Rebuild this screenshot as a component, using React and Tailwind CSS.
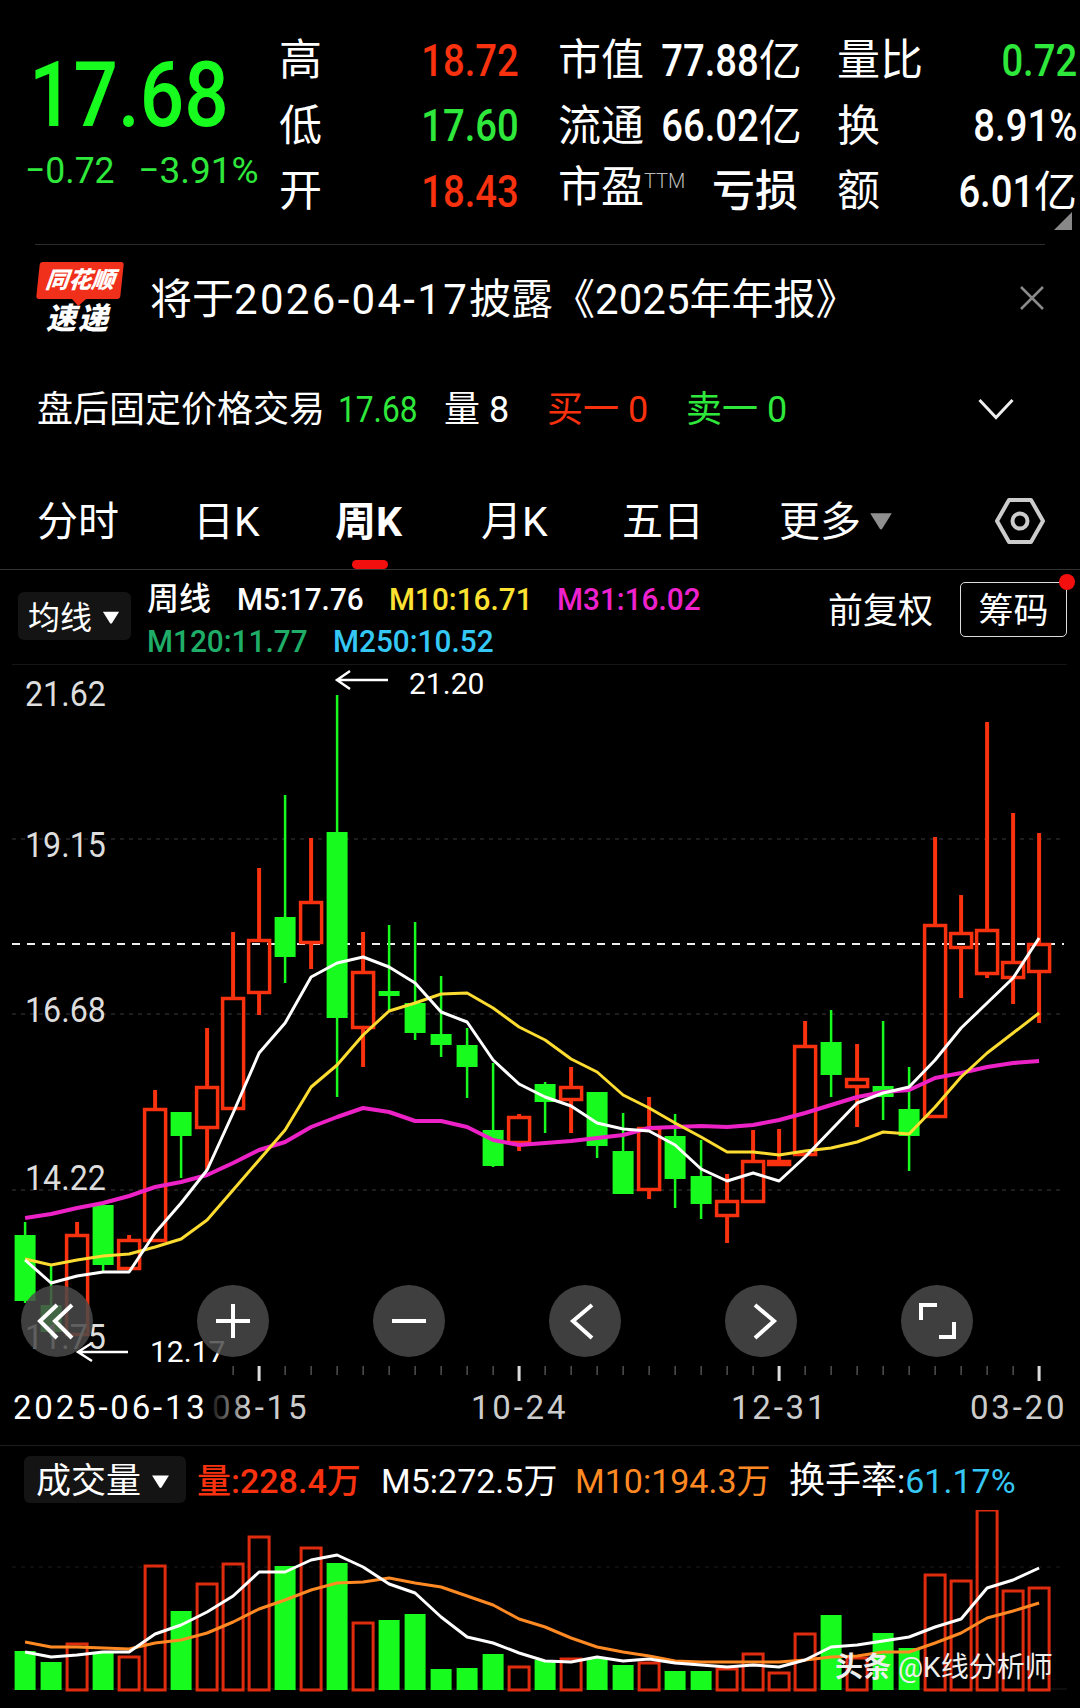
import React from 'react';

const FONT = "[font-family:'Roboto','Noto_Sans_CJK_SC',sans-serif]";
// the app's digits are narrower than Roboto's
const NARROW_L = 'inline-block origin-left scale-x-[.92]';

// [high, bodyTop, bodyBottom, low, up]
const candles = [
  [1222, 1235, 1301, 1303, 0], [1265, 1305, 1332, 1337, 0], [1222, 1234, 1334, 1334, 1], [1203, 1205, 1265, 1271, 0],
  [1235, 1239, 1268, 1268, 1], [1090, 1108, 1240, 1240, 1], [1112, 1112, 1136, 1178, 0], [1028, 1086, 1127, 1170, 1],
  [932, 997, 1108, 1108, 1], [868, 939, 992, 1015, 1], [795, 917, 957, 983, 0], [838, 901, 942, 969, 1],
  [695, 832, 1018, 1097, 0], [932, 971, 1027, 1067, 1], [925, 991, 996, 1010, 0], [922, 1003, 1033, 1040, 0],
  [976, 1034, 1045, 1057, 0], [1028, 1045, 1067, 1098, 0], [1063, 1130, 1166, 1167, 0], [1114, 1116, 1142, 1151, 1],
  [1082, 1084, 1102, 1133, 0], [1067, 1086, 1099, 1133, 1], [1092, 1092, 1146, 1158, 0], [1113, 1151, 1194, 1194, 0],
  [1097, 1127, 1189, 1199, 1], [1114, 1136, 1179, 1208, 0], [1140, 1176, 1204, 1219, 0], [1174, 1200, 1215, 1243, 1],
  [1130, 1160, 1201, 1201, 1], [1129, 1160, 1164, 1164, 1], [1021, 1045, 1154, 1154, 1], [1010, 1042, 1075, 1097, 0],
  [1044, 1078, 1086, 1127, 1], [1021, 1086, 1097, 1120, 0], [1067, 1109, 1136, 1171, 0], [837, 924, 1116, 1118, 1],
  [895, 932, 947, 998, 1], [722, 929, 973, 978, 1], [813, 961, 977, 1004, 1], [833, 943, 971, 1023, 1],
];

const m5 = [1260, 1283, 1276, 1272, 1272, 1233, 1203, 1170, 1113, 1053, 1023, 977, 963, 957, 967, 983, 1012, 1022, 1060, 1084, 1097, 1106, 1123, 1129, 1131, 1145, 1169, 1181, 1173, 1181, 1157, 1130, 1103, 1093, 1087, 1060, 1028, 1003, 978, 938];
const m10 = [1259, 1265, 1260, 1256, 1254, 1247, 1239, 1220, 1190, 1160, 1130, 1087, 1065, 1035, 1011, 1003, 994, 993, 1008, 1027, 1040, 1059, 1072, 1095, 1108, 1123, 1137, 1152, 1152, 1155, 1151, 1148, 1142, 1132, 1134, 1107, 1077, 1053, 1033, 1013];
const m31 = [1218, 1214, 1208, 1203, 1196, 1187, 1182, 1175, 1163, 1150, 1142, 1127, 1117, 1108, 1112, 1121, 1121, 1127, 1140, 1145, 1143, 1141, 1138, 1135, 1128, 1127, 1126, 1127, 1125, 1120, 1113, 1105, 1097, 1092, 1090, 1078, 1073, 1067, 1063, 1061];

const volumes = [1651, 1662, 1643, 1653, 1656, 1565, 1611, 1583, 1563, 1536, 1566, 1547, 1563, 1622, 1620, 1614, 1669, 1668, 1654, 1666, 1660, 1658, 1658, 1665, 1662, 1671, 1671, 1668, 1653, 1672, 1633, 1615, 1657, 1633, 1648, 1574, 1580, 1509, 1590, 1587];
const volM5 = [1652, 1657, 1655, 1652, 1652, 1634, 1625, 1612, 1596, 1572, 1572, 1560, 1555, 1567, 1584, 1593, 1617, 1637, 1643, 1653, 1661, 1662, 1657, 1661, 1659, 1663, 1665, 1667, 1665, 1667, 1660, 1647, 1645, 1641, 1637, 1627, 1619, 1588, 1580, 1568];
const volM10 = [1642, 1647, 1647, 1648, 1649, 1643, 1640, 1633, 1622, 1609, 1600, 1590, 1583, 1582, 1578, 1583, 1587, 1596, 1605, 1619, 1627, 1638, 1647, 1652, 1656, 1661, 1662, 1662, 1662, 1662, 1660, 1657, 1656, 1652, 1652, 1643, 1633, 1618, 1611, 1603];

const RED = '#f8310f';
const GREEN = '#18fb1e';
const cx = (i) => 25.1 + 26 * i;
const points = (ys) => ys.map((y, i) => `${cx(i)},${y}`).join(' ');

function Line({ ys, color, width = 3 }) {
  return <polyline points={points(ys)} fill="none" stroke={color} strokeWidth={width} strokeLinejoin="round" />;
}

function KChart() {
  return (
    <svg className="block" width="1080" height="722" viewBox="0 664 1080 722">
      <line x1="12" x2="1067" y1="664.5" y2="664.5" stroke="#161616" />
      {[839, 1014, 1190].map((y) => (
        <line key={y} x1="12" x2="1064" y1={y} y2={y} stroke="#3a3a3a" strokeDasharray="4 5" />
      ))}
      <line x1="12" x2="1064" y1="944" y2="944" stroke="#eee" strokeWidth="2" strokeDasharray="8 7" />
      {candles.map(([high, top, bottom, low, up], i) => {
        const x = cx(i);
        const color = up ? RED : GREEN;
        return (
          <g key={i}>
            <line x1={x} x2={x} y1={high} y2={up ? top : low} stroke={color} strokeWidth={up ? 4 : 2.5} />
            {up ? <line x1={x} x2={x} y1={bottom} y2={low} stroke={color} strokeWidth="4" /> : null}
            {up ? (
              <rect x={x - 10.5} y={top + 1.5} width="21" height={Math.max(bottom - top - 1, 1)} fill="none" stroke={color} strokeWidth="3.5" />
            ) : (
              <rect x={x - 10.5} y={top} width="21" height={bottom - top} fill={color} />
            )}
          </g>
        );
      })}
      <Line ys={m31} color="#ec22c6" width={4} />
      <Line ys={m10} color="#fddc32" />
      <Line ys={m5} color="#ffffff" />
      {/* time axis */}
      {candles.map((_, i) => {
        if (i < 8) return null;
        const major = (i - 9) % 10 === 0;
        return (
          <line key={i} x1={cx(i)} x2={cx(i)} y1="1366" y2={major ? 1381 : 1375} stroke={major ? '#ddd' : '#777'} strokeWidth={major ? 3 : 1} />
        );
      })}
      {/* high and low arrows */}
      <path d="M388 680H338M350 671L337 680L350 689" fill="none" stroke="#fff" strokeWidth="2.5" />
      <path d="M128 1352H78M92 1343L78 1352L92 1361" fill="none" stroke="#fff" strokeWidth="2.5" />
    </svg>
  );
}

function VolumeChart() {
  return (
    <svg className="block" width="1080" height="198" viewBox="0 1510 1080 198">
      <line x1="12" x2="1064" y1="1567" y2="1567" stroke="#1c1c1c" strokeDasharray="4 5" />
      <line x1="12" x2="1067" y1="1689" y2="1689" stroke="#1c1c1c" />
      {volumes.map((top, i) => {
        const x = cx(i);
        return candles[i][4] ? (
          <rect key={i} x={x - 10} y={top + 1} width="20" height={1690 - top - 1} fill="none" stroke={RED} strokeWidth="3" opacity="0.9" />
        ) : (
          <rect key={i} x={x - 10.5} y={top} width="21" height={1690 - top} fill={GREEN} />
        );
      })}
      <Line ys={volM10} color="#ff8a24" />
      <Line ys={volM5} color="#ffffff" />
    </svg>
  );
}

function Stat({ label, value, unit, color = 'text-white' }) {
  return (
    <div className="flex w-[240px] items-center justify-between whitespace-nowrap">
      <span>{label}</span>
      <span className={color}>
        {value ? <span className="inline-block origin-right scale-x-[.85] text-[45px] font-medium">{value}</span> : null}
        {unit}
      </span>
    </div>
  );
}

function Caret({ className }) {
  return (
    <svg className={className} viewBox="0 0 20 16" fill="currentColor">
      <path d="M1 1.5H19L11 14.5Q10 15.5 9 14.5Z" />
    </svg>
  );
}

function RoundButton({ d }) {
  return (
    <div className="h-[72px] w-[72px] rounded-full bg-[#4a4a4a]/85">
      <svg width="72" height="72" viewBox="0 0 72 72" fill="none" stroke="#fff" strokeWidth="4">
        <path d={d} />
      </svg>
    </div>
  );
}

export default function App() {
  return (
    <div className={`flex h-[1708px] w-[1080px] flex-col overflow-hidden bg-black text-white ${FONT}`}>
      {/* Quote header */}
      <header className="relative flex h-[245px] shrink-0 pt-[28px] text-[43px] leading-[65.5px]">
        <div className="w-[279px] shrink-0 pl-[25px]">
          <div className="ml-[4px] h-[121px] origin-left scale-x-[.86] whitespace-nowrap pt-[12px] text-[91px] font-medium leading-[110px] text-[#18fb1e]">17.68</div>
          <div className="mt-[-3px] flex gap-[20px] whitespace-nowrap text-[37px] leading-[50px] text-[#2fe83c]">
            <span className="inline-block origin-left scale-x-[.96]">−0.72</span>
            <span>−3.91%</span>
          </div>
        </div>
        <div className="grid auto-rows-[65.5px] grid-cols-[240px_240px_240px] gap-x-[39px]">
          <Stat label="高" value="18.72" color="text-[#f8310f]" />
          <Stat label="市值" value="77.88" unit="亿" />
          <Stat label="量比" value="0.72" color="text-[#2fe83c]" />
          <Stat label="低" value="17.60" color="text-[#2fe83c]" />
          <Stat label="流通" value="66.02" unit="亿" />
          <Stat label="换" value="8.91%" />
          <Stat label="开" value="18.43" color="text-[#f8310f]" />
          <Stat
            label={
              <>
                市盈<span className="relative top-[-14px] text-[20px] font-light text-[#bbb]">TTM</span>
              </>
            }
            unit={<span className="font-medium">亏损</span>}
          />
          <Stat label="额" value="6.01" unit="亿" />
        </div>
        <div className="absolute right-[8px] top-[212px] h-0 w-0 border-b-[18px] border-l-[18px] border-b-[#888] border-l-transparent" />
        <div className="absolute bottom-0 left-[35px] h-px w-[1010px] bg-[#2c2c2c]" />
      </header>

      {/* Report notice */}
      <section className="flex h-[105px] shrink-0 items-center">
        <div className="ml-[38px] flex w-[112px] shrink-0 flex-col pt-[2px] italic">
          <div className="relative flex h-[37px] w-[84px] -skew-x-6 items-center justify-center rounded-[3px] bg-[#f0301a] text-[23px] font-black leading-none">
            同花顺
            <div className="absolute bottom-[-5px] left-[38px] h-[10px] w-[10px] rotate-45 bg-[#f0301a]" />
          </div>
          <div className="mt-[4px] pl-[8px] text-[30px] font-black leading-[32px] tracking-[2px]">速递</div>
        </div>
        <div className="mt-[4px] whitespace-nowrap text-[42px] leading-none">
          将于<span className="tracking-[2.3px]">2026-04-17</span>披露《2025年年报》
        </div>
        <svg className="ml-auto mr-[35px]" width="26" height="26" viewBox="0 0 26 26" stroke="#8a8a8a" strokeWidth="2.5">
          <path d="M2 2L24 24M24 2L2 24" />
        </svg>
      </section>

      {/* After hours */}
      <section className="flex h-[115px] shrink-0 items-start pl-[37px] pt-[38px] text-[36px] leading-[44px]">
        <span className="w-[301px]">盘后固定价格交易</span>
        <span className="w-[106px] text-[#2fe83c]">
          <span className="inline-block origin-left scale-x-[.88]">17.68</span>
        </span>
        <span className="w-[103px]">量 8</span>
        <span className="w-[139px] text-[#f8310f]">买一 0</span>
        <span className="text-[#2fe83c]">卖一 0</span>
        <svg className="ml-auto mr-[66px] mt-[10px]" width="36" height="22" viewBox="0 0 36 22" fill="none" stroke="#eee" strokeWidth="3">
          <path d="M1.5 2L18 19.5L34.5 2" />
        </svg>
      </section>

      {/* Period tabs */}
      <nav className="relative flex h-[105px] shrink-0 items-start border-b border-[#333] pt-[31px] text-[41px] leading-[52px]">
        <span className="ml-[37px] w-[156px]">分时</span>
        <span className="w-[142px]">日K</span>
        <span className="w-[146px] font-bold">周K</span>
        <span className="w-[141px]">月K</span>
        <span className="w-[157px]">五日</span>
        <span className="flex items-center">
          更多
          <Caret className="ml-[8px] mt-[-2px] h-[20px] w-[24px] text-[#8f8f8f]" />
        </span>
        <svg className="absolute left-[994px] top-[31px]" width="52" height="50" viewBox="0 0 52 50" fill="none" stroke="#ccc" strokeWidth="4" strokeLinejoin="round">
          <path d="M15 4H37L49 25L37 46H15L3 25Z" />
          <circle cx="26" cy="25" r="7.5" />
        </svg>
        <div className="absolute bottom-0 left-[352px] h-[9px] w-[36px] rounded-full bg-[#f40f0f]" />
      </nav>

      {/* MA legend */}
      <section className="relative flex h-[94px] shrink-0 pl-[18px] pt-[22px]">
        <div className="flex h-[48px] w-[113px] items-center rounded-[6px] bg-[#141414] pl-[10px] pt-[3px] text-[32px]">
          均线
          <Caret className="ml-[10px] h-[15px] w-[18px] text-white" />
        </div>
        <div className="ml-[16px] mt-[-14px] whitespace-nowrap text-[32px] font-medium leading-[42px]">
          <div className="flex">
            <span className="w-[90px]">周线</span>
            <span className="w-[152px]"><span className="inline-block origin-left scale-x-[.93]">M5:17.76</span></span>
            <span className="w-[168px] text-[#fde232]"><span className="inline-block origin-left scale-x-[.93]">M10:16.71</span></span>
            <span className="text-[#ee22cc]"><span className="inline-block origin-left scale-x-[.93]">M31:16.02</span></span>
          </div>
          <div className="flex">
            <span className="w-[186px] text-[#1fae68]"><span className="inline-block origin-left scale-x-[.93]">M120:11.77</span></span>
            <span className="text-[#35c8f5]"><span className="inline-block origin-left scale-x-[.93]">M250:10.52</span></span>
          </div>
        </div>
        <span className="absolute left-[828px] top-[20px] text-[35px] leading-[44px]">前复权</span>
        <div className="absolute left-[960px] top-[12px] flex h-[55px] w-[107px] items-center justify-center rounded-[5px] border border-[#ddd] pt-[5px] text-[35px]">
          筹码
          <div className="absolute right-[-9px] top-[-9px] h-[16px] w-[16px] rounded-full bg-[#f40f0f]" />
        </div>
      </section>

      {/* K line chart */}
      <section className="relative shrink-0">
        <KChart />
        <span className={`absolute left-[25px] top-[11px] text-[35px] leading-[40px] text-[#ddd] ${NARROW_L}`}>21.62</span>
        <span className={`absolute left-[25px] top-[162px] text-[35px] leading-[40px] text-[#ddd] ${NARROW_L}`}>19.15</span>
        <span className={`absolute left-[25px] top-[327px] text-[35px] leading-[40px] text-[#ddd] ${NARROW_L}`}>16.68</span>
        <span className={`absolute left-[25px] top-[495px] text-[35px] leading-[40px] text-[#ddd] ${NARROW_L}`}>14.22</span>
        <span className={`absolute left-[25px] top-[654px] text-[35px] leading-[40px] text-[#ddd] ${NARROW_L}`}>11.75</span>
        <span className="absolute left-[409px] top-[0px] text-[30px] leading-[40px]">21.20</span>
        <span className="absolute left-[150px] top-[668px] text-[30px] leading-[40px]">12.17</span>
        <div className="absolute left-[21px] top-[621px] flex gap-[104px]">
          <RoundButton d="M36 20L19 36L36 53M51 20L34 36L51 53" />
          <RoundButton d="M19 36H53M36 19V53" />
          <RoundButton d="M19 36H53" />
          <RoundButton d="M43 20L24 36L43 53" />
          <RoundButton d="M30 20L49 36L30 53" />
          <RoundButton d="M20 35V20H36M53 37V52H38" />
        </div>
      </section>

      {/* Dates */}
      <section className="relative h-[59px] shrink-0 text-[33px] leading-[44px] tracking-[2.8px] text-[#ccc]">
        <span className="absolute left-[13px] top-0 text-white">2025-06-13</span>
        <span className="absolute left-[212px] top-0">08-15</span>
        <div className="absolute left-[207px] top-0 h-[44px] w-[40px] bg-gradient-to-r from-black to-transparent" />
        <span className="absolute left-[471px] top-0">10-24</span>
        <span className="absolute left-[731px] top-0">12-31</span>
        <span className="absolute left-[970px] top-0">03-20</span>
      </section>

      {/* Volume */}
      <section className="relative flex h-[65px] shrink-0 whitespace-nowrap border-t border-[#1c1c1c] pl-[24px] pt-[12px] text-[34px] leading-[47px]">
        <div className="mt-[-2px] flex h-[47px] w-[162px] items-center rounded-[6px] bg-[#141414] pl-[12px] pt-[3px] text-[35px]">
          成交量
          <Caret className="ml-[10px] h-[15px] w-[19px] text-white" />
        </div>
        <span className="ml-[11px] w-[184px] font-medium text-[#f8310f]">量:228.4万</span>
        <span className="w-[194px]">M5:272.5万</span>
        <span className="w-[214px] text-[#ff8a24]">M10:194.3万</span>
        <span><span className="text-[36px]">换手率</span>:<span className="text-[#35c8f5]">61.17%</span></span>
      </section>
      <section className="relative shrink-0">
        <VolumeChart />
        <div className="absolute left-[835px] top-[138px] whitespace-nowrap text-[28px] leading-[40px] text-[#eee]">
          <span className="font-bold">头条</span> @K线分析师
        </div>
      </section>
    </div>
  );
}
